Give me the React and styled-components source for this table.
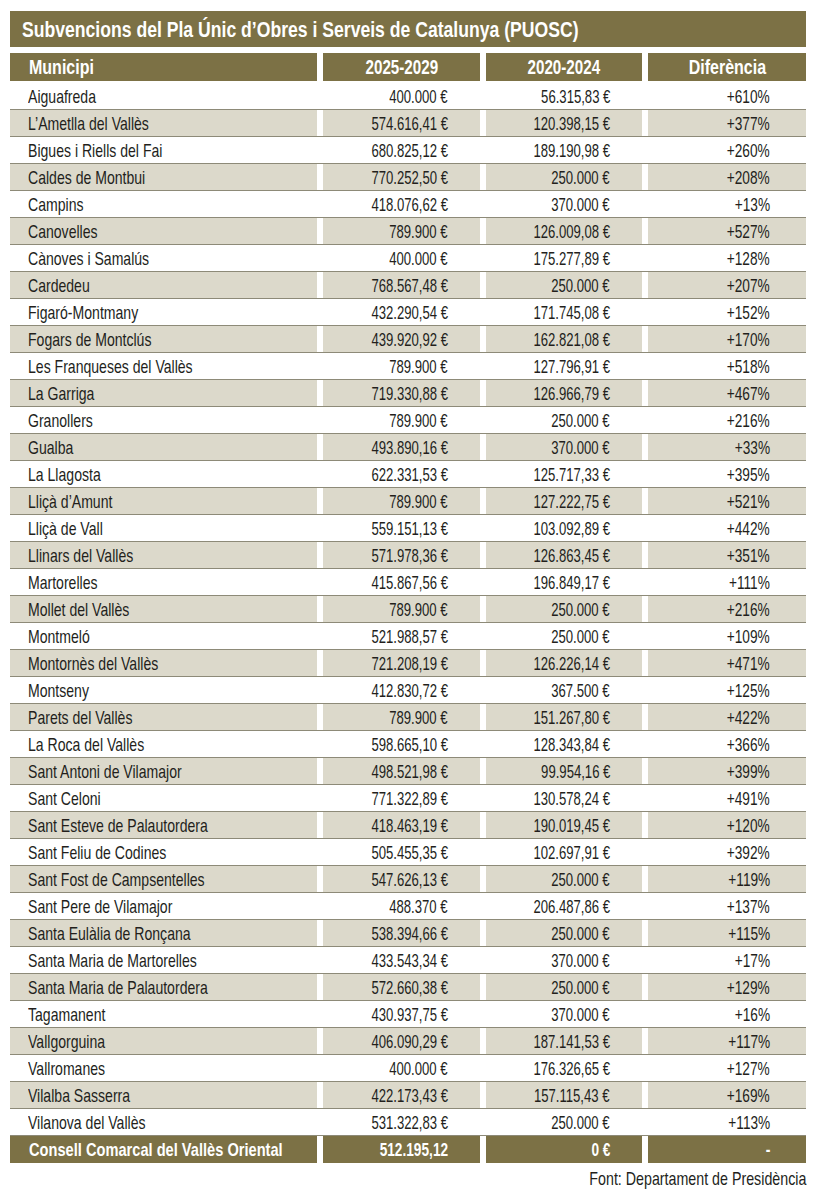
import React from 'react';
import styled, { createGlobalStyle } from 'styled-components';

const GlobalStyle = createGlobalStyle`
  body {
    margin: 0;
    background: #fff;
    font-family: "Liberation Sans", Arial, sans-serif;
    color: #231f1c;
  }
`;

const OLIVE = '#7c7145';
const BEIGE = '#dcd9cb';

const rows = [
  ['Aiguafreda', '400.000 €', '56.315,83 €', '+610%'],
  ['L’Ametlla del Vallès', '574.616,41 €', '120.398,15 €', '+377%'],
  ['Bigues i Riells del Fai', '680.825,12 €', '189.190,98 €', '+260%'],
  ['Caldes de Montbui', '770.252,50 €', '250.000 €', '+208%'],
  ['Campins', '418.076,62 €', '370.000 €', '+13%'],
  ['Canovelles', '789.900 €', '126.009,08 €', '+527%'],
  ['Cànoves i Samalús', '400.000 €', '175.277,89 €', '+128%'],
  ['Cardedeu', '768.567,48 €', '250.000 €', '+207%'],
  ['Figaró-Montmany', '432.290,54 €', '171.745,08 €', '+152%'],
  ['Fogars de Montclús', '439.920,92 €', '162.821,08 €', '+170%'],
  ['Les Franqueses del Vallès', '789.900 €', '127.796,91 €', '+518%'],
  ['La Garriga', '719.330,88 €', '126.966,79 €', '+467%'],
  ['Granollers', '789.900 €', '250.000 €', '+216%'],
  ['Gualba', '493.890,16 €', '370.000 €', '+33%'],
  ['La Llagosta', '622.331,53 €', '125.717,33 €', '+395%'],
  ['Lliçà d’Amunt', '789.900 €', '127.222,75 €', '+521%'],
  ['Lliçà de Vall', '559.151,13 €', '103.092,89 €', '+442%'],
  ['Llinars del Vallès', '571.978,36 €', '126.863,45 €', '+351%'],
  ['Martorelles', '415.867,56 €', '196.849,17 €', '+111%'],
  ['Mollet del Vallès', '789.900 €', '250.000 €', '+216%'],
  ['Montmeló', '521.988,57 €', '250.000 €', '+109%'],
  ['Montornès del Vallès', '721.208,19 €', '126.226,14 €', '+471%'],
  ['Montseny', '412.830,72 €', '367.500 €', '+125%'],
  ['Parets del Vallès', '789.900 €', '151.267,80 €', '+422%'],
  ['La Roca del Vallès', '598.665,10 €', '128.343,84 €', '+366%'],
  ['Sant Antoni de Vilamajor', '498.521,98 €', '99.954,16 €', '+399%'],
  ['Sant Celoni', '771.322,89 €', '130.578,24 €', '+491%'],
  ['Sant Esteve de Palautordera', '418.463,19 €', '190.019,45 €', '+120%'],
  ['Sant Feliu de Codines', '505.455,35 €', '102.697,91 €', '+392%'],
  ['Sant Fost de Campsentelles', '547.626,13 €', '250.000 €', '+119%'],
  ['Sant Pere de Vilamajor', '488.370 €', '206.487,86 €', '+137%'],
  ['Santa Eulàlia de Ronçana', '538.394,66 €', '250.000 €', '+115%'],
  ['Santa Maria de Martorelles', '433.543,34 €', '370.000 €', '+17%'],
  ['Santa Maria de Palautordera', '572.660,38 €', '250.000 €', '+129%'],
  ['Tagamanent', '430.937,75 €', '370.000 €', '+16%'],
  ['Vallgorguina', '406.090,29 €', '187.141,53 €', '+117%'],
  ['Vallromanes', '400.000 €', '176.326,65 €', '+127%'],
  ['Vilalba Sasserra', '422.173,43 €', '157.115,43 €', '+169%'],
  ['Vilanova del Vallès', '531.322,83 €', '250.000 €', '+113%'],
];

// condensed look: Liberation Sans squeezed horizontally
const Narrow = styled.span`
  display: inline-block;
  white-space: nowrap;
  transform: scaleX(${p => p.$sx || 0.74});
  transform-origin: ${p => p.$origin || 'left'} center;
`;

const Page = styled.div`
  width: 796px;
  padding: 11px 10px 0;
`;

const Title = styled.h1`
  margin: 0;
  height: 36px;
  background: ${OLIVE};
  color: #fff;
  font-size: 22px;
  font-weight: 700;
  line-height: 37px;
  padding-left: 12px;
  overflow: hidden;
`;

const Grid = styled.div`
  display: grid;
  grid-template-columns: 307px 157px 156px 158px;
  column-gap: 6px;
`;

const HeadRow = styled(Grid)`
  margin-top: 6px;
  margin-bottom: 2px;
  height: 28px;
`;

const HeadCell = styled.div`
  background: ${OLIVE};
  color: #fff;
  font-weight: 700;
  font-size: 20px;
  line-height: 29px;
  overflow: hidden;
  text-align: ${p => (p.$left ? 'left' : 'center')};
  padding-left: ${p => (p.$left ? '19px' : '0')};
`;

const Row = styled(Grid)`
  height: 26px;
  border-bottom: 1px solid #8d8a78;
`;

const Cell = styled.div`
  background: ${p => (p.$shade ? BEIGE : '#fff')};
  font-size: 19px;
  line-height: 27px;
  overflow: hidden;
  text-align: ${p => (p.$left ? 'left' : 'right')};
  padding: ${p => (p.$left ? '0 0 0 18px' : `0 ${p.$pr}px 0 0`)};
`;

const TotalRow = styled(Grid)`
  height: 27px;
`;

const TotalCell = styled.div`
  background: ${OLIVE};
  color: #fff;
  font-weight: 700;
  font-size: 19px;
  line-height: 28px;
  overflow: hidden;
  text-align: ${p => (p.$left ? 'left' : 'right')};
  padding: ${p => (p.$left ? '0 0 0 19px' : `0 ${p.$pr}px 0 0`)};
`;

const Source = styled.div`
  text-align: right;
  font-size: 19px;
  margin-top: 5px;
  color: #231f1c;
`;

const pads = [32, 32, 36];
const numScale = [0.69, 0.69, 0.72];

export default function App() {
  return (
    <Page>
      <GlobalStyle />
      <Title>
        <Narrow $sx={0.8}>Subvencions del Pla Únic d’Obres i Serveis de Catalunya (PUOSC)</Narrow>
      </Title>
      <HeadRow>
        <HeadCell $left><Narrow $sx={0.8}>Municipi</Narrow></HeadCell>
        <HeadCell><Narrow $sx={0.76} $origin="center">2025-2029</Narrow></HeadCell>
        <HeadCell><Narrow $sx={0.76} $origin="center">2020-2024</Narrow></HeadCell>
        <HeadCell><Narrow $sx={0.8} $origin="center">Diferència</Narrow></HeadCell>
      </HeadRow>
      {rows.map((r, i) => (
        <Row key={r[0]}>
          <Cell $left $shade={i % 2 === 1}><Narrow>{r[0]}</Narrow></Cell>
          {r.slice(1).map((v, j) => (
            <Cell key={j} $shade={i % 2 === 1} $pr={pads[j]}>
              <Narrow $sx={numScale[j]} $origin="right">{v}</Narrow>
            </Cell>
          ))}
        </Row>
      ))}
      <TotalRow>
        <TotalCell $left><Narrow $sx={0.77}>Consell Comarcal del Vallès Oriental</Narrow></TotalCell>
        <TotalCell $pr={pads[0]}><Narrow $sx={0.72} $origin="right">512.195,12</Narrow></TotalCell>
        <TotalCell $pr={pads[1]}><Narrow $sx={0.72} $origin="right">0 €</Narrow></TotalCell>
        <TotalCell $pr={pads[2]}><Narrow $origin="right">-</Narrow></TotalCell>
      </TotalRow>
      <Source>
        <Narrow $sx={0.75} $origin="right">Font: Departament de Presidència</Narrow>
      </Source>
    </Page>
  );
}
